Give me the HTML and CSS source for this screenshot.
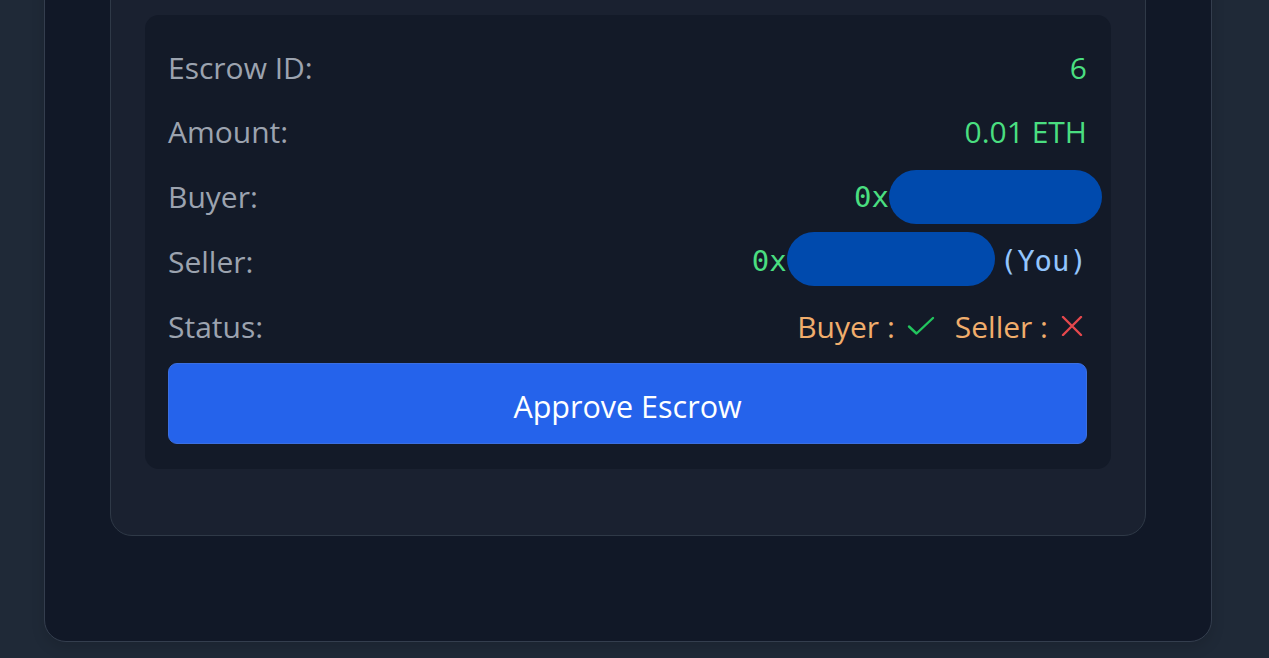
FILE: index.html
```html
<!DOCTYPE html>
<html lang="en">
<head>
<meta charset="utf-8">
<title>Escrow</title>
<link rel="stylesheet" href="styles.css">
</head>
<body>
<div class="page">
  <div class="outer-card">
    <div class="inner-card">
      <div class="panel">
        <div class="row">
          <span class="label">Escrow ID:</span>
          <span class="value green">6</span>
        </div>
        <div class="row">
          <span class="label">Amount:</span>
          <span class="value green">0.01 ETH</span>
        </div>
        <div class="row">
          <span class="label">Buyer:</span>
          <span class="value mono green">0x<span class="redact redact-buyer"></span></span>
        </div>
        <div class="row">
          <span class="label">Seller:</span>
          <span class="value mono green">0x<span class="redact redact-seller"></span><span class="you">(You)</span></span>
        </div>
        <div class="row">
          <span class="label">Status:</span>
          <span class="value status">
            <span class="party">Buyer :</span>
            <svg class="icon check" width="28" height="20" viewBox="0 0 28 20" aria-hidden="true"><path d="M2 10.5 L9.5 17.5 L26 2" fill="none" stroke="#22c55e" stroke-width="2.4" stroke-linecap="round" stroke-linejoin="round"/></svg>
            <span class="party seller">Seller :</span>
            <svg class="icon cross" width="22" height="20" viewBox="0 0 22 20" aria-hidden="true"><path d="M2 1 L20 19 M20 1 L2 19" fill="none" stroke="#e5484d" stroke-width="2.4" stroke-linecap="round"/></svg>
          </span>
        </div>
        <button class="approve">Approve Escrow</button>
      </div>
    </div>
  </div>
</div>
</body>
</html>
```
FILE: styles.css
```css
html, body {
  margin: 0;
  padding: 0;
}
body {
  background: #1f2937;
  font-family: "Open Sans", "Noto Sans", sans-serif;
  height: 658px;
  overflow: hidden;
}
.page {
  padding: 0 57px 0 44px;
}
.outer-card {
  margin-top: -60px;
  background: #111827;
  border: 1px solid #343e4e;
  border-radius: 22px;
  padding: 29px 65px 105px 65px;
  box-shadow: 0 6px 14px rgba(0, 0, 0, 0.12);
}
.inner-card {
  background: #1a2130;
  border: 1px solid #2f3947;
  border-radius: 22px;
  padding: 44px 34px 66px 34px;
}
.panel {
  background: #131a28;
  border-radius: 14px;
  padding: 22px 24px 25px 23px;
  display: flex;
  flex-direction: column;
}
.row {
  display: flex;
  justify-content: space-between;
  align-items: center;
  height: 60px;
  margin-bottom: 4.75px;
}
.label {
  color: #9ca3af;
  font-size: 30px;
}
.value {
  font-size: 30px;
  display: flex;
  align-items: center;
}
.green {
  color: #4ade80;
}
.mono {
  font-family: "DejaVu Sans Mono", "Liberation Mono", monospace;
  font-size: 29px;
}
.redact {
  display: inline-block;
  background: #004aad;
  border-radius: 28px;
  height: 54px;
}
.redact-buyer {
  width: 213px;
  margin-right: -15px;
}
.redact-seller {
  width: 208px;
  margin-top: -4px;
}
.you {
  color: #93c5fd;
  margin-left: 5px;
}
.status {
  color: #f0ad6c;
}
.party.seller {
  margin-left: 20px;
}
.icon.check {
  margin-left: 12px;
}
.icon.cross {
  margin-left: 13px;
  margin-right: 4px;
}
.approve {
  margin-top: 2px;
  height: 81px;
  background: #2563eb;
  color: #ffffff;
  border: 1px solid #3b6fe0;
  border-radius: 9px;
  font-family: "Open Sans", "Noto Sans", sans-serif;
  font-size: 30.5px;
  padding: 6px 0 0 0;
  cursor: pointer;
}
```
